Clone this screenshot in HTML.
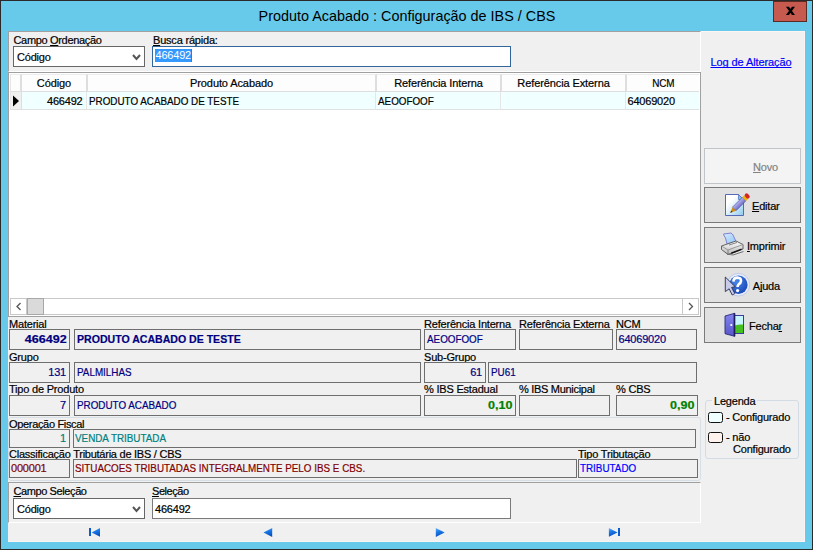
<!DOCTYPE html>
<html><head><meta charset="utf-8">
<style>
*{box-sizing:border-box}
html,body{margin:0;padding:0}
body{width:813px;height:550px;overflow:hidden;position:relative;background:#2a2a2a;font-family:"Liberation Sans",sans-serif;font-size:11px;color:#000;letter-spacing:-0.2px;-webkit-text-stroke:0.2px}
.a{position:absolute}
.t{position:absolute;white-space:nowrap;line-height:13px}
.f{position:absolute;border:1px solid #6e6e6e;background:#f0f0f0;height:21px;line-height:19px;padding:0 3px;white-space:nowrap;overflow:hidden;color:#000080}
.f.s{height:19px;line-height:17px}
.r{text-align:right}
.u span{display:inline-block;transform:scaleX(0.895);transform-origin:0 50%;letter-spacing:0}
.bu span{display:inline-block;transform:scaleX(0.96);transform-origin:0 50%;letter-spacing:0}
.bd span{display:inline-block;transform:scaleX(1.14);transform-origin:100% 50%;letter-spacing:0}
.b{font-weight:bold}
u{text-decoration:underline;text-decoration-skip-ink:none}
.hd{position:absolute;letter-spacing:-0.1px;top:74px;height:18px;line-height:17px;text-align:center;background:#fdfdfd;border-right:2px solid #dedede;border-bottom:1px solid #dedede;border-top:1px solid #ececec}
.cell{position:absolute;top:92px;height:18px;line-height:19px;background:#f0ffff;border-right:1px solid #e6e6e6;border-bottom:1px solid #e0e0e0;padding:0 2px;white-space:nowrap;overflow:hidden}
.btn{position:absolute;left:704px;width:97px;height:36px;background:#e1e1e1;border:1px solid #7a7a7a}
.btn .lb{position:absolute;top:12px;white-space:nowrap}
</style></head><body>
<!-- window frame -->
<div class="a" style="left:1px;top:1px;width:811px;height:548px;background:#68caea"></div>
<div class="t" style="left:0;top:6px;width:813px;text-align:center;font-size:14.4px;line-height:20px;color:#000;letter-spacing:0;-webkit-text-stroke:0;padding-left:1px">Produto Acabado : Configuração de IBS / CBS</div>
<div class="a" style="left:773px;top:1px;width:34px;height:21px;background:#c65a4f;border:1px solid #5c2a22"></div>
<svg class="a" style="left:773px;top:0" width="34" height="24"><path d="M12.9 6.7 L15.9 6.7 L22 15 L19 15 Z M19 6.7 L22 6.7 L15.9 15 L12.9 15 Z" fill="#000"/></svg>
<!-- client -->
<div class="a" style="left:8px;top:31px;width:797px;height:511px;background:#f0f0f0"></div>

<div class="a" style="left:701px;top:31px;width:104px;height:1px;background:#fbf6f4"></div>
<div class="a" style="left:8px;top:541px;width:797px;height:1px;background:#f9f4f2"></div>
<div class="a" style="left:804px;top:31px;width:1px;height:511px;background:#f9f4f2"></div>
<!-- top panel -->
<div class="a" style="left:8px;top:31px;width:693px;height:41px;border-top:1px solid #a0a0a0;border-left:1px solid #a0a0a0;border-bottom:1px solid #fff;border-right:1px solid #fff"></div>
<div class="t" style="left:13.5px;top:34px;letter-spacing:-0.33px">Campo <u>O</u>rdenação</div>
<div class="a" style="left:13px;top:46px;width:132px;height:21px;background:#fff;border:1px solid #666"></div>
<div class="t" style="left:17px;top:51px">Código</div>
<svg class="a" style="left:132px;top:53.5px" width="10" height="7"><path d="M1 1 L4.5 5 L8 1" stroke="#555" stroke-width="2" fill="none"/></svg>
<div class="t" style="left:153px;top:34px"><u>B</u>usca rápida:</div>
<div class="a" style="left:152px;top:46px;width:359px;height:21px;background:#fff;border:1px solid #31669a"></div>
<div class="t" style="left:155px;top:49px;height:13px;line-height:13px;width:36px;background:#3399ff;color:#fff;padding:0 0 0 0.5px;-webkit-text-stroke:0">466492</div>
<div class="a" style="left:191px;top:49px;width:1px;height:13px;background:#b06010"></div>

<!-- grid -->
<div class="a" style="left:8px;top:72px;width:693px;height:245px;background:#fff;border-top:1px solid #a0a0a0;border-left:1px solid #a0a0a0;border-right:1px solid #a0a0a0;border-bottom:1px solid #a0a0a0"></div>
<div class="hd" style="left:10px;width:12px;border-left:1px solid #e6e6e6"></div>
<div class="hd" style="left:22px;width:66px">Código</div>
<div class="hd" style="left:88px;width:289px">Produto Acabado</div>
<div class="hd" style="left:377px;width:125px">Referência Interna</div>
<div class="hd" style="left:502px;width:125px">Referência Externa</div>
<div class="hd" style="left:627px;width:72px;border-right:none"><span style="display:inline-block;transform:scaleX(0.9)">NCM</span></div>
<div class="cell" style="left:10px;width:12px;background:#f0f0f0;border-right:1px solid #dedede;border-left:1px solid #e6e6e6"></div>
<svg class="a" style="left:12px;top:94.5px" width="8" height="12"><path d="M1 0.5 L7 6 L1 11.5 Z" fill="#000"/></svg>
<div class="cell r" style="left:22px;width:65px;padding-right:3.5px">466492</div>
<div class="cell u" style="left:87px;width:289px;padding-left:1.5px"><span>PRODUTO ACABADO DE TESTE</span></div>
<div class="cell u" style="left:376px;width:125px;padding-left:1.5px"><span>AEOOFOOF</span></div>
<div class="cell" style="left:501px;width:125px"></div>
<div class="cell" style="left:626px;width:73px;border-right:none;padding-left:1.5px">64069020</div>
<!-- scrollbar -->
<div class="a" style="left:10px;top:298px;width:689px;height:17px;background:#fff;border-top:1px solid #c8c8c8;border-bottom:1px solid #c8c8c8"></div>
<div class="a" style="left:10px;top:298px;width:17px;height:17px;border:1px solid #c8c8c8;background:#fff"></div>
<svg class="a" style="left:14px;top:301px" width="10" height="11"><path d="M6.5 2 L3 5.5 L6.5 9" stroke="#555" stroke-width="1.3" fill="none"/></svg>
<div class="a" style="left:27px;top:298px;width:17px;height:17px;border:1px solid #a8a8a8;background:#dadada"></div>
<div class="a" style="left:682px;top:298px;width:17px;height:17px;border:1px solid #c8c8c8;background:#fff"></div>
<svg class="a" style="left:686px;top:301px" width="10" height="11"><path d="M3 2 L6.5 5.5 L3 9" stroke="#555" stroke-width="1.3" fill="none"/></svg>

<!-- details -->
<div class="t" style="left:9px;top:318px">Material</div>
<div class="t" style="left:424px;top:318px">Referência Interna</div>
<div class="t" style="left:519px;top:318px">Referência Externa</div>
<div class="t" style="left:616px;top:318px">NCM</div>
<div class="f r b bd" style="left:9px;top:329px;width:61px;padding-right:2px"><span>466492</span></div>
<div class="f b bu" style="left:74px;top:329px;width:347px;padding-left:2px"><span>PRODUTO ACABADO DE TESTE</span></div>
<div class="f u" style="left:424px;top:329px;width:92px;padding-left:1.5px"><span>AEOOFOOF</span></div>
<div class="f" style="left:519px;top:329px;width:94px"></div>
<div class="f" style="left:616px;top:329px;width:81px;padding-left:1.5px">64069020</div>

<div class="t" style="left:9px;top:351px">Grupo</div>
<div class="t" style="left:424px;top:351px">Sub-Grupo</div>
<div class="f r" style="left:9px;top:362px;width:61px">131</div>
<div class="f u" style="left:74px;top:362px;width:347px;padding-left:2px"><span>PALMILHAS</span></div>
<div class="f r" style="left:424px;top:362px;width:62px">61</div>
<div class="f u" style="left:488px;top:362px;width:209px;padding-left:2px"><span>PU61</span></div>

<div class="t" style="left:9px;top:383px">Tipo de Produto</div>
<div class="t" style="left:424px;top:383px">% IBS Estadual</div>
<div class="t" style="left:519px;top:383px;letter-spacing:-0.3px">% IBS Municipal</div>
<div class="t" style="left:616px;top:383px">% CBS</div>
<div class="f r" style="left:9px;top:395px;width:61px">7</div>
<div class="f u" style="left:74px;top:395px;width:347px;padding-left:2px"><span>PRODUTO ACABADO</span></div>
<div class="f r b bd" style="left:424px;top:395px;width:92px;color:#008000;padding-right:3px"><span>0,10</span></div>
<div class="f" style="left:519px;top:395px;width:91px"></div>
<div class="f r b bd" style="left:616px;top:395px;width:82px;color:#008000;padding-right:3px"><span>0,90</span></div>

<div class="a" style="left:8px;top:417px;width:693px;height:64px;border:1px solid #d6dee6;border-radius:3px"></div>
<div class="t" style="left:9px;top:418px;letter-spacing:-0.33px">Operação Fiscal</div>
<div class="f s r" style="left:9px;top:429px;width:61px;color:#008080">1</div>
<div class="f s u" style="left:73px;top:429px;width:623px;color:#008080;padding-left:1px"><span>VENDA TRIBUTADA</span></div>

<div class="t" style="left:9px;top:448px;letter-spacing:-0.25px">Classificação Tributária de IBS / CBS</div>
<div class="t" style="left:578px;top:448px">Tipo Tributação</div>
<div class="f s" style="left:9px;top:459px;width:61px;color:#800000;padding-left:1px">000001</div>
<div class="f s u" style="left:73px;top:459px;width:504px;color:#800000;padding-left:1px"><span>SITUACOES TRIBUTADAS INTEGRALMENTE PELO IBS E CBS.</span></div>
<div class="f s u" style="left:578px;top:459px;width:120px;color:#0000ff;padding-left:1px"><span>TRIBUTADO</span></div>

<!-- bottom panel -->
<div class="a" style="left:8px;top:482px;width:693px;height:41px;border-top:1px solid #a0a0a0;border-left:1px solid #a0a0a0;border-bottom:1px solid #fff;border-right:1px solid #fff"></div>
<div class="t" style="left:13.5px;top:485px;letter-spacing:-0.4px"><u>C</u>ampo Seleção</div>
<div class="a" style="left:13px;top:498px;width:132px;height:21px;background:#fff;border:1px solid #666"></div>
<div class="t" style="left:17px;top:503px">Código</div>
<svg class="a" style="left:132px;top:505.5px" width="10" height="7"><path d="M1 1 L4.5 5 L8 1" stroke="#555" stroke-width="2" fill="none"/></svg>
<div class="t" style="left:152px;top:485px;letter-spacing:-0.45px"><u>S</u>eleção</div>
<div class="a" style="left:152px;top:498px;width:359px;height:21px;background:#fff;border:1px solid #7a7a7a"></div>
<div class="t" style="left:155px;top:503px">466492</div>

<!-- nav -->
<svg width="0" height="0" style="position:absolute"><defs><linearGradient id="gn" x1="0" y1="0" x2="0.3" y2="1"><stop offset="0" stop-color="#6ab4ff"/><stop offset="0.45" stop-color="#1a7ae8"/><stop offset="1" stop-color="#0750c0"/></linearGradient></defs></svg>
<svg class="a" style="left:88px;top:527px" width="14" height="11"><rect x="1" y="1" width="2" height="8" fill="#0a5cd0"/><path d="M12 1 L12 9.8 L3.7 5.4 Z" fill="url(#gn)"/></svg>
<svg class="a" style="left:263px;top:527px" width="11" height="11"><path d="M9.2 1 L9.2 10 L0.5 5.5 Z" fill="url(#gn)"/></svg>
<svg class="a" style="left:435px;top:527px" width="11" height="11"><path d="M0.8 1 L0.8 10 L9.6 5.5 Z" fill="url(#gn)"/></svg>
<svg class="a" style="left:608px;top:527px" width="14" height="11"><path d="M0.9 1 L0.9 9.8 L9.5 5.4 Z" fill="url(#gn)"/><rect x="10" y="1" width="2" height="8" fill="#0a5cd0"/></svg>

<!-- right panel -->
<div class="t" style="left:710.5px;top:56px;color:#0000ff;text-decoration:underline;text-decoration-skip-ink:none;letter-spacing:-0.1px">Log de Alteração</div>

<div class="btn" style="top:148px;background:#f4f4f4;border-color:#c2c5c8"><span class="lb" style="left:48px;color:#838383"><u>N</u>ovo</span></div>
<div class="btn" style="top:187px"><span class="lb" style="left:47px"><u>E</u>ditar</span></div>
<div class="btn" style="top:227px"><span class="lb" style="left:42px"><u>I</u>mprimir</span></div>
<div class="btn" style="top:267px"><span class="lb" style="left:47.8px">A<u>j</u>uda</span></div>
<div class="btn" style="top:307px"><span class="lb" style="left:44px">Fecha<u>r</u></span></div>
<!-- editar icon -->
<svg class="a" style="left:718px;top:188px" width="36" height="34">
<defs><linearGradient id="gd" x1="0" y1="0" x2="1" y2="1"><stop offset="0.3" stop-color="#ffffff"/><stop offset="1" stop-color="#8ccbef"/></linearGradient>
<linearGradient id="gp" x1="0" y1="0" x2="0" y2="1"><stop offset="0" stop-color="#b4b4f0"/><stop offset="1" stop-color="#7070c8"/></linearGradient></defs>
<path d="M7.5 6.5 H20.5 L25.5 11.5 V27.5 H7.5 Z" fill="url(#gd)" stroke="#5868b8" stroke-width="1"/>
<path d="M20.5 6.5 L25.5 11.5 H20.5 Z" fill="#7cc4ee" stroke="#5a72c4" stroke-width="0.8"/>
<g transform="translate(1.6 -1.4) rotate(-45 21 16)">
<rect x="12" y="13.5" width="14" height="5" fill="url(#gp)" stroke="#4a4a9a" stroke-width="0.6"/>
<path d="M12 13.5 L6.5 16 L12 18.5 Z" fill="#d08a14"/>
<path d="M6.5 16 L8.6 15 L8.6 17 Z" fill="#222"/>
<rect x="26" y="13.3" width="2.5" height="5.4" fill="#f2b400"/>
<rect x="28.3" y="13.2" width="4" height="5.6" rx="2" fill="#d42424"/>
</g>
</svg>
<!-- imprimir icon -->
<svg class="a" style="left:716px;top:228px" width="36" height="34">
<defs><linearGradient id="gpr" x1="0" y1="0" x2="0" y2="1"><stop offset="0" stop-color="#ffffff"/><stop offset="1" stop-color="#b8b8b8"/></linearGradient>
<linearGradient id="gpa" x1="0" y1="0" x2="1" y2="1"><stop offset="0" stop-color="#d8ecff"/><stop offset="1" stop-color="#8ec4f4"/></linearGradient></defs>
<path d="M7.5 6 L15 5 Q16.5 6 17 7 L20 13.5 L11 16 L9.5 10 Q8 8 7.5 6 Z" fill="url(#gpa)" stroke="#7777cc" stroke-width="0.9"/>
<path d="M5.5 18 L20 13 L27 16.5 L27 21 L12 26.5 L5.5 21.5 Z" fill="url(#gpr)" stroke="#555" stroke-width="0.9"/>
<path d="M5.5 18 L12 22 L27 16.5" fill="none" stroke="#888" stroke-width="0.8"/>
<path d="M12 22 L12 26.5" stroke="#777" stroke-width="0.8"/>
<path d="M15 24.5 L25.5 20.5 L25.5 22 L15.5 26 Z" fill="#111"/>
<path d="M11 26 L17 27 L27.5 23.5" fill="none" stroke="#666" stroke-width="0.9"/>
<path d="M13 17 L21 14.5" stroke="#666" stroke-width="0.8"/>
</svg>
<!-- ajuda icon -->
<svg class="a" style="left:718px;top:268px" width="36" height="34">
<defs><radialGradient id="gh" cx="0.4" cy="0.35" r="0.7"><stop offset="0" stop-color="#4a86ea"/><stop offset="1" stop-color="#1846b8"/></radialGradient></defs>
<circle cx="20.4" cy="16.7" r="11.3" fill="#e6ecf8" stroke="#b6c4e4" stroke-width="0.8"/>
<circle cx="20.4" cy="16.7" r="9.2" fill="url(#gh)"/>
<path d="M15.4 13.6 Q15.6 9.6 19.4 9.6 Q23.2 9.8 23 13 Q22.8 15 20.6 16.4 Q19.6 17.2 19.6 19" fill="none" stroke="#fff" stroke-width="2.6"/>
<circle cx="19.6" cy="22.6" r="1.6" fill="#fff"/>
<path d="M7.3 9 L17.2 18.8 L13.6 19.4 L16.8 25.6 L14.2 27 L11.2 20.8 L7.3 23.6 Z" fill="#c8cce8" stroke="#2c3050" stroke-width="0.9" stroke-linejoin="round"/>
</svg>
<!-- fechar icon -->
<svg class="a" style="left:718px;top:308px" width="36" height="34">
<defs><linearGradient id="gdo" x1="0" y1="0" x2="0" y2="1"><stop offset="0" stop-color="#8484f0"/><stop offset="1" stop-color="#5656c8"/></linearGradient></defs>
<rect x="16.5" y="7.5" width="9" height="18" fill="#c8f6ff" stroke="#3c3c9c" stroke-width="1"/>
<path d="M17 17.5 Q21 16 25 16.5 V25 H17 Z" fill="#44c020"/>
<path d="M17 25 H25 V25.5" fill="none"/>
<path d="M7 8 L16.7 5.3 V28.3 L7 25.7 Z" fill="url(#gdo)" stroke="#2a2a78" stroke-width="0.9" stroke-linejoin="round"/>
<path d="M16.4 5.3 V28.3" stroke="#1e1e5a" stroke-width="1.6"/>
<circle cx="13.3" cy="17" r="1.1" fill="#fff"/>
</svg>

<!-- legenda -->
<div class="a" style="left:704.5px;top:400px;width:94.5px;height:59px;border:1px solid #d3dce5;border-radius:3px"></div>
<div class="t" style="left:712px;top:395px;background:#f0f0f0;padding:0 2px">Legenda</div>
<div class="a" style="left:708px;top:412px;width:15px;height:11px;background:#f0ffff;border:1.6px solid #111;border-radius:2.5px"></div>
<div class="t" style="left:726px;top:411px">- Configurado</div>
<div class="a" style="left:708px;top:432px;width:15px;height:11px;background:#fdf2ec;border:1.6px solid #111;border-radius:2.5px"></div>
<div class="t" style="left:726px;top:431px">- não</div>
<div class="t" style="left:733px;top:443px">Configurado</div>
</body></html>
